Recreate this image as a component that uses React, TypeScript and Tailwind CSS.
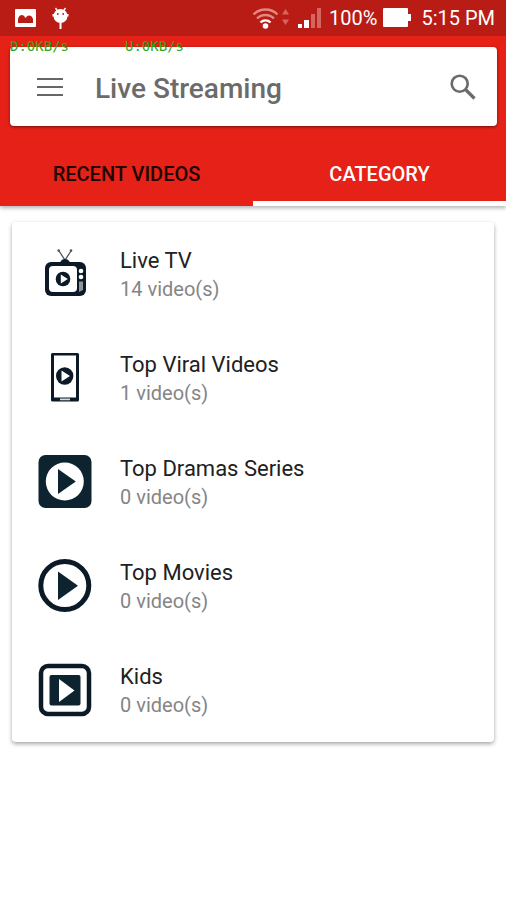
import React from "react";

const TvIcon = () => (
  <svg viewBox="0 0 54 54" className="size-[54px]" aria-hidden="true">
    <path d="M21 4l6 9 6-9" fill="none" stroke="#4b5660" strokeWidth="1.3" />
    <circle cx="20.7" cy="3.6" r="1.3" fill="#4b5660" />
    <circle cx="33" cy="3.6" r="1.3" fill="#4b5660" />
    <path d="M22 15.5c1-2.4 3-3.5 5-3.5s4 1.1 5 3.5z" fill="#0b1a26" />
    <rect x="7" y="15" width="41" height="34" rx="6" fill="#0b1a26" />
    <rect x="11" y="19" width="28" height="26" rx="4" fill="#fff" />
    <circle cx="25" cy="32" r="7.3" fill="#0b1a26" />
    <path d="M22.8 27.5v9l7-4.5z" fill="#fff" />
    <circle cx="43" cy="24" r="2.3" fill="#fff" />
    <circle cx="43" cy="30" r="2.3" fill="#fff" />
    <path d="M41 34.500h4V43l-4 2z" fill="#8b979f" />
  </svg>
);

const PhoneIcon = () => (
  <svg viewBox="0 0 54 54" className="size-[54px]" aria-hidden="true">
    <rect x="13" y="2" width="28" height="48.500" rx="1.5" fill="#0b1a26" />
    <rect x="16" y="4.500" width="22" height="42" fill="#fff" />
    <rect x="22" y="47.500" width="10" height="1.8" fill="#d5dadd" />
    <circle cx="26.700" cy="25" r="8.700" fill="#0b1a26" />
    <path d="M23.5 19.5v11l8.500-5.500z" fill="#fff" />
  </svg>
);

const DramaIcon = () => (
  <svg viewBox="0 0 54 54" className="size-[54px]" aria-hidden="true">
    <rect x="0.5" y="0" width="53" height="53" rx="7" fill="#0d2430" />
    <circle cx="26.800" cy="26.500" r="19" fill="#fff" />
    <path d="M20 14v25L37.800 26.500z" fill="#0d2430" />
  </svg>
);

const MovieIcon = () => (
  <svg viewBox="0 0 54 54" className="size-[54px]" aria-hidden="true">
    <circle cx="26.800" cy="26.500" r="24" fill="none" stroke="#0b1a26" strokeWidth="5" />
    <path d="M20 12.500v28.500L40 26.700z" fill="#0d2430" />
  </svg>
);

const KidsIcon = () => (
  <svg viewBox="0 0 54 54" className="size-[54px]" aria-hidden="true">
    <rect x="3" y="3" width="48" height="48" rx="7" fill="none" stroke="#0b1a26" strokeWidth="4.500" />
    <rect x="11.500" y="12" width="31" height="30.500" rx="2" fill="#0d2430" />
    <path d="M21 16v23l15.500-11.500z" fill="#fff" />
  </svg>
);

const categories = [
  { title: "Live TV", count: 14, Icon: TvIcon },
  { title: "Top Viral Videos", count: 1, Icon: PhoneIcon },
  { title: "Top Dramas Series", count: 0, Icon: DramaIcon },
  { title: "Top Movies", count: 0, Icon: MovieIcon },
  { title: "Kids", count: 0, Icon: KidsIcon },
];

const StatusBar = () => (
  <div className="flex h-9 items-center justify-between bg-[#b91c14] pl-[15px] pr-[11px] text-white">
    <div className="flex items-center gap-4">
      <svg viewBox="0 0 21 18" className="h-[18px] w-[21px]" aria-hidden="true">
        <rect width="21" height="18" rx="1" fill="#fff" />
        <path d="M3 14v-4q1-4 4-4 2 0 3.500 3 1.500-3 4-2.500 3 .5 3.500 4V14z" fill="#b91c14" />
      </svg>
      <svg viewBox="0 0 17 22" className="h-[22px] w-[17px]" aria-hidden="true">
        <path d="M3.500 1l2 3M13.500 1l-2 3" stroke="#fff" strokeWidth="1.4" />
        <circle cx="8.500" cy="9" r="7" fill="#fff" />
        <path d="M0.500 7h16v2.500h-16z" fill="#fff" />
        <circle cx="5.800" cy="7" r="0.9" fill="#b91c14" />
        <circle cx="11.200" cy="7" r="0.9" fill="#b91c14" />
        <path d="M8.500 15v7" stroke="#fff" strokeWidth="2" />
      </svg>
    </div>
    <div className="flex items-center text-xl">
      <svg viewBox="0 0 38 24" className="mr-2 h-6 w-[38px]" fill="none" aria-hidden="true">
        <path d="M1.500 8.500a17 17 0 0 1 24 0M5 12.500a12 12 0 0 1 17 0" stroke="#e08a83" strokeWidth="2.4" />
        <path d="M8.500 16.500a7 7 0 0 1 10 0" stroke="#fff" strokeWidth="2.4" />
        <circle cx="13.500" cy="20" r="2.8" fill="#fff" />
        <path d="M33.500 3l3.500 5.500h-7zM33.500 19l3.500-5.500h-7z" fill="#d5665e" />
      </svg>
      <svg viewBox="0 0 23 20" className="mr-2 h-5 w-[23px]" aria-hidden="true">
        <path d="M0 16h4v4H0zM6 12h5v8H6z" fill="#fff" />
        <path d="M13 6h4v14h-4zM19 0h4v20h-4z" fill="#d5665e" />
      </svg>
      <span>100%</span>
      <svg viewBox="0 0 28 20" className="ml-1.5 mr-2.5 h-5 w-7" aria-hidden="true">
        <path d="M1 0h23q1 0 1 1v5h3v7h-3v5q0 1-1 1H1q-1 0-1-1V1q0-1 1-1z" fill="#fff" />
      </svg>
      <span>5:15 PM</span>
    </div>
  </div>
);

const App = () => {
  return (
    <div className="min-h-screen bg-white font-[Roboto,sans-serif]">
      <header className="relative bg-[#e62117] shadow-[0_2px_4px_rgba(0,0,0,0.3)]">
        <StatusBar />

        {/* network speed overlay */}
        <div className="pointer-events-none absolute left-[10px] top-[38px] z-10 flex gap-14 font-['DejaVu_Sans_Mono',monospace] text-sm leading-4 text-[#1fae12]">
          <span>D:0KB/s</span>
          <span>U:0KB/s</span>
        </div>

        <div className="pl-[10px] pr-[9px] pt-[11px]">
          <div className="flex h-[79px] items-center rounded bg-white pl-[26px] pr-[21px] shadow-[0_1px_3px_rgba(0,0,0,0.5)]">
            <button type="button" aria-label="Open menu">
              <svg viewBox="0 0 28 20" className="h-5 w-7" aria-hidden="true">
                <path d="M1 2h26M1 10h26M1 18h26" stroke="#666" strokeWidth="2" />
              </svg>
            </button>
            <h1 className="ml-[31px] flex-1 pt-1 text-[28px] font-medium leading-8 text-[#6b6b6b]">Live Streaming</h1>
            <button type="button" aria-label="Search">
              <svg viewBox="0 0 26 26" className="size-[26px]" fill="none" stroke="#6b6b6b" aria-hidden="true">
                <circle cx="9.700" cy="9.700" r="8" strokeWidth="2.600" />
                <path d="M15.500 15.500l9 9" strokeWidth="3.200" />
              </svg>
            </button>
          </div>
        </div>

        <nav className="mt-3.5 grid h-[66px] grid-cols-2 text-xl font-medium">
          <button type="button" className="border-b-[5px] border-transparent pt-1.5 text-[#1c0503]">
            RECENT VIDEOS
          </button>
          <button type="button" className="border-b-[5px] border-white pt-1.5 text-white">
            CATEGORY
          </button>
        </nav>
      </header>

      <main className="px-3 pb-4 pt-4">
        <ul className="rounded bg-white shadow-[0_2px_4px_rgba(0,0,0,0.35)]">
          {categories.map(({ title, count, Icon }) => (
            <li key={title}>
              <a href="#" className="flex h-[104px] items-center gap-7 pl-[26px]">
                <Icon />
                <div>
                  <p className="text-[22px] leading-[30px] text-[#212121]">{title}</p>
                  <p className="text-xl leading-[26px] text-[#858585]">{count} video(s)</p>
                </div>
              </a>
            </li>
          ))}
        </ul>
      </main>
    </div>
  );
};

export default App;
